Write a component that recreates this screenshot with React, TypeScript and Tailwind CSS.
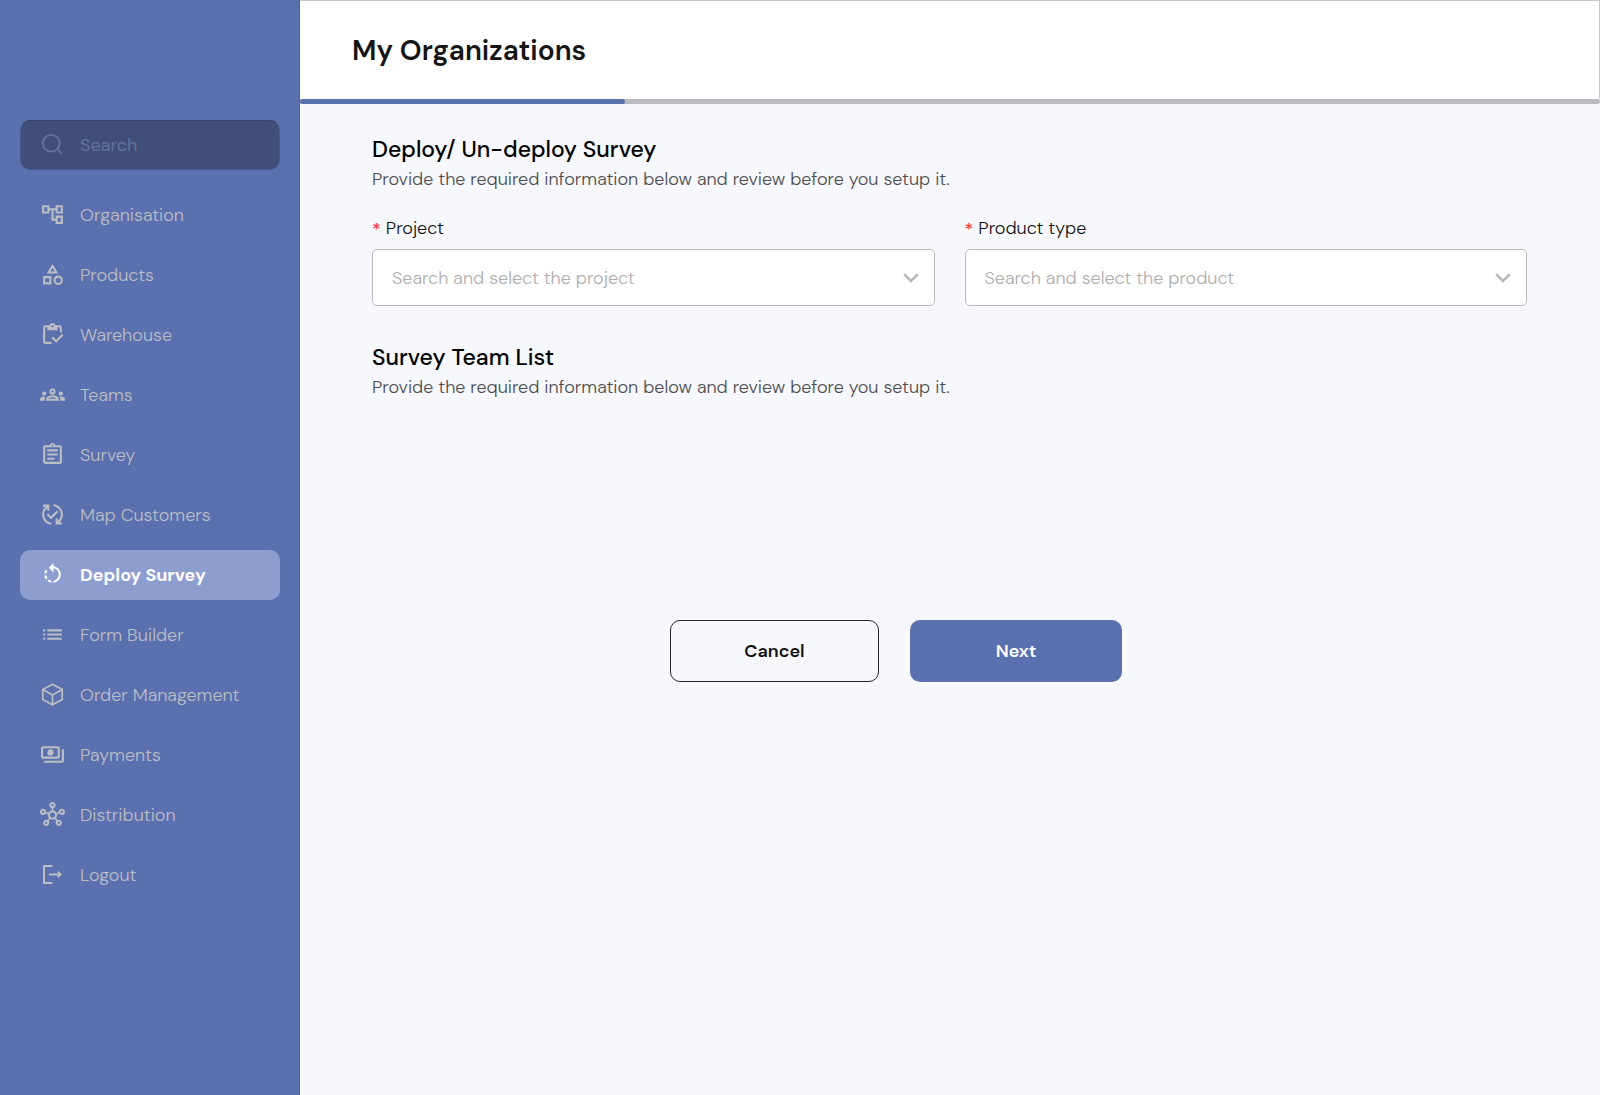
import { useState } from "react";
import type { ReactNode } from "react";
import {
  MdOutlineAccountTree,
  MdOutlineCategory,
  MdOutlineInventory,
  MdOutlineGroups,
  MdOutlineAssignment,
  MdOutlinePublishedWithChanges,
  MdRotateLeft,
  MdOutlineList,
  MdOutlinePayments,
  MdOutlineHub,
} from "react-icons/md";

const iconClass = "mb-px size-[25px] shrink-0";

function BoxIcon() {
  return (
    <svg viewBox="0 0 25 25" className={iconClass} fill="none" stroke="currentColor" strokeWidth="1.7" strokeLinejoin="round" strokeLinecap="round" aria-hidden="true">
      <path d="M12.5 2.3 22.2 7.4V17.6L12.5 22.8 2.8 17.6V7.4Z" />
      <path d="M2.8 7.4 12.5 12.9 22.2 7.4M12.5 12.9V22.8" />
    </svg>
  );
}

function LogoutIcon() {
  return (
    <svg viewBox="0 0 25 25" className={iconClass} fill="none" stroke="currentColor" strokeWidth="2" strokeLinejoin="round" aria-hidden="true">
      <path d="M12.5 4H4V21H12.5" />
      <path d="M9 12.5H19" />
      <path d="M18.2 9.6 21.4 12.5 18.2 15.4Z" fill="currentColor" strokeWidth="1" />
    </svg>
  );
}

function SearchIcon() {
  return (
    <svg viewBox="0 0 25 25" className={iconClass} fill="none" stroke="currentColor" strokeWidth="1.8" aria-hidden="true">
      <circle cx="11.2" cy="11.2" r="8.4" />
      <path d="M17.2 17.2 22 22" />
    </svg>
  );
}

function Chevron() {
  return (
    <svg viewBox="0 0 16 10" className="pointer-events-none absolute right-4 h-[10px] w-4 text-[#b5b5b5]" fill="none" stroke="currentColor" strokeWidth="2.4" aria-hidden="true">
      <path d="M1.2 1.2 8 8 14.8 1.2" />
    </svg>
  );
}

const items: { label: string; icon: ReactNode }[] = [
  { label: "Organisation", icon: <MdOutlineAccountTree className={iconClass} /> },
  { label: "Products", icon: <MdOutlineCategory className={iconClass} /> },
  { label: "Warehouse", icon: <MdOutlineInventory className={iconClass} /> },
  { label: "Teams", icon: <MdOutlineGroups className={iconClass} /> },
  { label: "Survey", icon: <MdOutlineAssignment className={iconClass} /> },
  { label: "Map Customers", icon: <MdOutlinePublishedWithChanges className={iconClass} /> },
  { label: "Deploy Survey", icon: <MdRotateLeft className={iconClass} /> },
  { label: "Form Builder", icon: <MdOutlineList className={iconClass} /> },
  { label: "Order Management", icon: <BoxIcon /> },
  { label: "Payments", icon: <MdOutlinePayments className={iconClass} /> },
  { label: "Distribution", icon: <MdOutlineHub className={iconClass} /> },
  { label: "Logout", icon: <LogoutIcon /> },
];

function Sidebar() {
  const active = "Deploy Survey";
  return (
    <aside className="w-[300px] shrink-0 border-r border-[#4060a8] bg-[#5b70af] pt-[120px] pr-[19px] pb-10 pl-5">
      <label className="flex h-[50px] items-center gap-[15px] rounded-[10px] border border-[#4a5a8c] border-t-[#36436a] bg-[#414e79] px-[19px] text-[#66739f]">
        <SearchIcon />
        <input
          type="search"
          aria-label="Search"
          placeholder="Search"
          className="w-full min-w-0 bg-transparent text-lg outline-none placeholder:text-[#66739f]"
        />
      </label>
      <nav className="mt-5 flex flex-col gap-[10px]">
        {items.map(({ label, icon }) => (
          <a
            key={label}
            href="#"
            aria-current={label === active ? "page" : undefined}
            className={
              label === active
                ? "flex h-[50px] items-center gap-[15px] rounded-[10px] bg-[#8e9dcf] px-5 text-lg font-bold text-white"
                : "flex h-[50px] items-center gap-[15px] rounded-[10px] px-5 text-lg font-light text-[#bcbec5]"
            }
          >
            {icon}
            {label}
          </a>
        ))}
      </nav>
    </aside>
  );
}

function SectionTitle({ title }: { title: string }) {
  return (
    <div>
      <h2 className="text-[23px] leading-[30px] font-medium text-black">{title}</h2>
      <p className="mt-0.5 text-lg leading-[26px] font-light text-[#4d4d4f]">
        Provide the required information below and review before you setup it.
      </p>
    </div>
  );
}

function SelectField({ id, label, placeholder }: { id: string; label: string; placeholder: string }) {
  const [value, setValue] = useState("");
  return (
    <div>
      <label htmlFor={id} className="flex items-center gap-[5px] text-lg leading-6 font-light text-[#111111]">
        <span className="pt-1 leading-5 font-medium text-[#ff3b3f]">*</span>
        {label}
      </label>
      <div className="relative mt-[9px] flex items-center">
        <select
          id={id}
          value={value}
          onChange={(e) => setValue(e.target.value)}
          className="h-[57px] w-full appearance-none rounded-[5px] border border-[#b9babb] bg-white pr-12 pl-[19px] text-lg font-light text-[#aeaeae]"
        >
          <option value="">{placeholder}</option>
        </select>
        <Chevron />
      </div>
    </div>
  );
}

export default function App() {
  return (
    <div className="flex min-h-screen bg-[#f7f8fc] font-['DM_Sans',Inter,sans-serif]">
      <Sidebar />
      <div className="flex min-w-0 flex-1 flex-col">
        <header className="flex h-[99px] items-center border-t border-r border-[#c6c6cb] bg-white px-[52px]">
          <h1 className="pt-0.5 text-[28px] leading-9 font-semibold text-[#151515]">My Organizations</h1>
        </header>
        <div role="progressbar" aria-label="Setup progress" aria-valuenow={25} aria-valuemin={0} aria-valuemax={100} className="h-[5px] rounded-full bg-[#b9bbbe]">
          <div className="h-full w-1/4 rounded-full bg-[#5b70af]" />
        </div>
        <main className="pt-[30px] pr-[73px] pb-10 pl-[72px]">
          <SectionTitle title="Deploy/ Un-deploy Survey" />
          <form onSubmit={(e) => e.preventDefault()}>
            <div className="mt-6 grid grid-cols-2 gap-[30px]">
              <SelectField id="project" label="Project" placeholder="Search and select the project" />
              <SelectField id="product" label="Product type" placeholder="Search and select the product" />
            </div>
            <div className="mt-9">
              <SectionTitle title="Survey Team List" />
            </div>
            <div className="mt-[220px] flex justify-center gap-[31px] pr-[107px]">
              <button type="button" className="h-[62px] w-[209px] rounded-[10px] border border-[#222428] text-lg font-semibold text-[#111111]">
                Cancel
              </button>
              <button type="submit" className="h-[62px] w-[212px] rounded-[10px] bg-[#5b70af] text-lg font-semibold text-white">
                Next
              </button>
            </div>
          </form>
        </main>
      </div>
    </div>
  );
}
